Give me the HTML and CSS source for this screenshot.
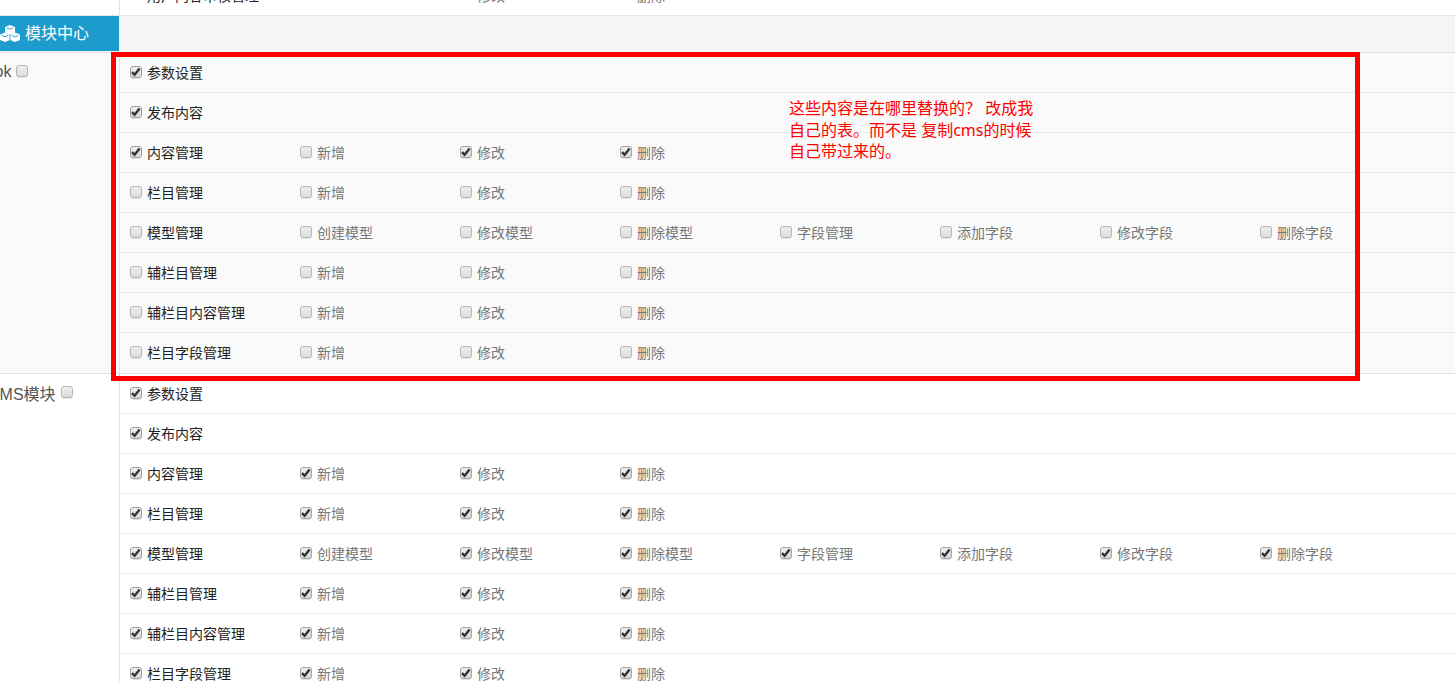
FILE: index.html
```html
<!DOCTYPE html>
<html lang="zh-CN">
<head>
<meta charset="utf-8">
<title>模块中心</title>
<link rel="stylesheet" href="styles.css">
</head>
<body>
<div class="page">
  <section class="group top-group">
    <div class="side"></div>
    <div class="rows">
      <div class="row">
        <label class="cell main"><input type="checkbox">用户内容审核管理</label><span class="cell"></span><label class="cell"><input type="checkbox">修改</label><label class="cell"><input type="checkbox">删除</label>
      </div>
    </div>
  </section>
  <header class="module-head">
    <div class="module-title">
      <svg class="cubes" viewBox="0 0 20 17" aria-hidden="true">
        <g fill="#fff">
          <path d="M10 0l5 2v5.4L10 9.4 5 7.4V2z"/>
          <path d="M5 7.6l5 2V15l-5 2-5-2V9.6z"/>
          <path d="M15 7.6l5 2V15l-5 2-5-2V9.6z"/>
        </g>
        <g fill="none" stroke="#1e9bcd" stroke-width=".9">
          <path d="M6.6 2.8L10 4.2l3.4-1.4"/>
          <path d="M1.6 10.4L5 11.8l3.4-1.4"/>
          <path d="M11.6 10.4l3.4 1.4 3.4-1.4"/>
          <path d="M10 9.4V15"/>
        </g>
      </svg>
      <span>模块中心</span>
    </div>
  </header>

  <section class="group hover-group">
    <div class="side"><label class="side-label book-label">Book<input type="checkbox"></label></div>
    <div class="rows">
      <div class="row"><label class="cell main"><input type="checkbox" checked>参数设置</label></div>
      <div class="row"><label class="cell main"><input type="checkbox" checked>发布内容</label></div>
      <div class="row">
        <label class="cell main"><input type="checkbox" checked>内容管理</label>
        <label class="cell"><input type="checkbox">新增</label>
        <label class="cell"><input type="checkbox" checked>修改</label>
        <label class="cell"><input type="checkbox" checked>删除</label>
      </div>
      <div class="row">
        <label class="cell main"><input type="checkbox">栏目管理</label>
        <label class="cell"><input type="checkbox">新增</label>
        <label class="cell"><input type="checkbox">修改</label>
        <label class="cell"><input type="checkbox">删除</label>
      </div>
      <div class="row">
        <label class="cell main"><input type="checkbox">模型管理</label>
        <label class="cell"><input type="checkbox">创建模型</label>
        <label class="cell"><input type="checkbox">修改模型</label>
        <label class="cell"><input type="checkbox">删除模型</label>
        <label class="cell"><input type="checkbox">字段管理</label>
        <label class="cell"><input type="checkbox">添加字段</label>
        <label class="cell"><input type="checkbox">修改字段</label>
        <label class="cell"><input type="checkbox">删除字段</label>
      </div>
      <div class="row">
        <label class="cell main"><input type="checkbox">辅栏目管理</label>
        <label class="cell"><input type="checkbox">新增</label>
        <label class="cell"><input type="checkbox">修改</label>
        <label class="cell"><input type="checkbox">删除</label>
      </div>
      <div class="row">
        <label class="cell main"><input type="checkbox">辅栏目内容管理</label>
        <label class="cell"><input type="checkbox">新增</label>
        <label class="cell"><input type="checkbox">修改</label>
        <label class="cell"><input type="checkbox">删除</label>
      </div>
      <div class="row">
        <label class="cell main"><input type="checkbox">栏目字段管理</label>
        <label class="cell"><input type="checkbox">新增</label>
        <label class="cell"><input type="checkbox">修改</label>
        <label class="cell"><input type="checkbox">删除</label>
      </div>
    </div>
  </section>

  <section class="group">
    <div class="side"><label class="side-label cms-label">CMS模块<input type="checkbox"></label></div>
    <div class="rows">
      <div class="row"><label class="cell main"><input type="checkbox" checked>参数设置</label></div>
      <div class="row"><label class="cell main"><input type="checkbox" checked>发布内容</label></div>
      <div class="row">
        <label class="cell main"><input type="checkbox" checked>内容管理</label>
        <label class="cell"><input type="checkbox" checked>新增</label>
        <label class="cell"><input type="checkbox" checked>修改</label>
        <label class="cell"><input type="checkbox" checked>删除</label>
      </div>
      <div class="row">
        <label class="cell main"><input type="checkbox" checked>栏目管理</label>
        <label class="cell"><input type="checkbox" checked>新增</label>
        <label class="cell"><input type="checkbox" checked>修改</label>
        <label class="cell"><input type="checkbox" checked>删除</label>
      </div>
      <div class="row">
        <label class="cell main"><input type="checkbox" checked>模型管理</label>
        <label class="cell"><input type="checkbox" checked>创建模型</label>
        <label class="cell"><input type="checkbox" checked>修改模型</label>
        <label class="cell"><input type="checkbox" checked>删除模型</label>
        <label class="cell"><input type="checkbox" checked>字段管理</label>
        <label class="cell"><input type="checkbox" checked>添加字段</label>
        <label class="cell"><input type="checkbox" checked>修改字段</label>
        <label class="cell"><input type="checkbox" checked>删除字段</label>
      </div>
      <div class="row">
        <label class="cell main"><input type="checkbox" checked>辅栏目管理</label>
        <label class="cell"><input type="checkbox" checked>新增</label>
        <label class="cell"><input type="checkbox" checked>修改</label>
        <label class="cell"><input type="checkbox" checked>删除</label>
      </div>
      <div class="row">
        <label class="cell main"><input type="checkbox" checked>辅栏目内容管理</label>
        <label class="cell"><input type="checkbox" checked>新增</label>
        <label class="cell"><input type="checkbox" checked>修改</label>
        <label class="cell"><input type="checkbox" checked>删除</label>
      </div>
      <div class="row">
        <label class="cell main"><input type="checkbox" checked>栏目字段管理</label>
        <label class="cell"><input type="checkbox" checked>新增</label>
        <label class="cell"><input type="checkbox" checked>修改</label>
        <label class="cell"><input type="checkbox" checked>删除</label>
      </div>
    </div>
  </section>
</div>

<div class="mark-box"></div>
<p class="mark-note">这些内容是在哪里替换的？ 改成我<br>自己的表。而不是 复制cms的时候<br>自己带过来的。</p>
</body>
</html>
```
FILE: styles.css
```css
html, body {
  margin: 0;
  height: 683px;
  overflow: hidden;
  background: #fff;
}

body {
  position: relative;
  font-family: "Liberation Sans", "Noto Sans CJK SC", sans-serif;
  font-size: 14px;
  color: #666;
}

/* The page is scrolled: a little of the left and top is off screen. */
.page {
  margin: -24px 0 0 -10px;
}

.group {
  display: flex;
  border-bottom: 1px dotted #ccc;
}

.side {
  flex: 0 0 129px;
  border-right: 1px dotted #ccc;
  box-sizing: content-box;
}

.side-label {
  display: flex;
  align-items: center;
  height: 37px;
  padding-bottom: 2px;
  white-space: nowrap;
  font-size: 16px;
  color: #555;
}

.book-label {
  margin-left: -15px;
}

.cms-label {
  margin-left: -2px;
}

.rows {
  flex: 1;
}

.row {
  display: grid;
  grid-template-columns: 170px repeat(7, 160px);
  align-items: center;
  height: 39px;
  padding-left: 10px;
  border-bottom: 1px dotted #ddd;
}

.row:last-child {
  height: 40px;
  border-bottom: 0;
}

.top-group .row:last-child {
  height: 39px;
}

.cell {
  display: flex;
  align-items: center;
  padding-bottom: 2px;
  white-space: nowrap;
  color: #777;
}

.main {
  color: #222;
}

.hover-group {
  background: #fafafa;
}

.module-head {
  display: flex;
  height: 36px;
  background: #f5f5f5;
  border-bottom: 1px dotted #ccc;
  box-sizing: content-box;
}

.module-title {
  display: flex;
  align-items: center;
  gap: 5px;
  width: 129px;
  height: 35px;
  padding: 0 0 3px 10px;
  box-sizing: border-box;
  background: #1e9bcd;
  color: #fff;
  font-size: 16px;
}

.cubes {
  width: 20px;
  height: 17px;
  flex: none;
  margin-top: 2px;
}

input[type="checkbox"] {
  appearance: none;
  width: 12px;
  height: 12px;
  margin: 0 5px 0 0;
  flex: none;
  box-sizing: border-box;
  border: 1px solid #b5b5b5;
  border-radius: 3px;
  background: linear-gradient(#efefef, #dcdcdc);
  box-shadow: 0 1px 0 #e6e6e6;
}

input[type="checkbox"]:checked {
  border-color: #a0a0a0;
  background:
    url("data:image/svg+xml,%3Csvg xmlns='http://www.w3.org/2000/svg' viewBox='0 0 12 12'%3E%3Cpath d='M2 6.2l2.6 2.6L9.6 2.6' fill='none' stroke='%23333' stroke-width='2.4'/%3E%3C/svg%3E") center/12px 12px no-repeat,
    linear-gradient(#efefef, #d8d8d8);
}

.top-group input[type="checkbox"] {
  margin-bottom: 6px;
}

.side-label input[type="checkbox"] {
  margin: -2px 0 0 5px;
}

.mark-box {
  position: absolute;
  left: 111px;
  top: 52px;
  width: 1249px;
  height: 329px;
  box-sizing: border-box;
  border: 5px solid #f00;
}

.mark-note {
  position: absolute;
  left: 789px;
  top: 98px;
  margin: 0;
  font-family: "Noto Sans", "Noto Sans CJK SC", sans-serif;
  font-size: 16px;
  line-height: 21.5px;
  white-space: nowrap;
  color: #f00;
}
```
